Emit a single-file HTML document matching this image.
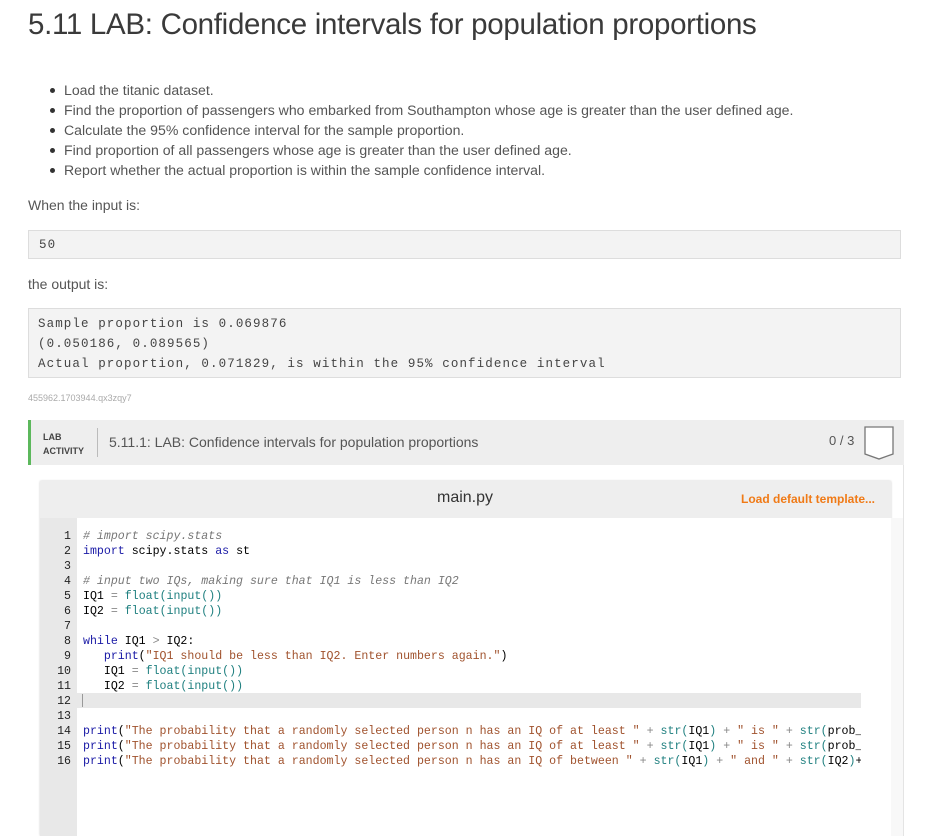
<!DOCTYPE html>
<html><head><meta charset="utf-8">
<style>
*{margin:0;padding:0;box-sizing:border-box}
body{width:928px;height:836px;overflow:hidden;background:#fff;font-family:"Liberation Sans",sans-serif;color:#333;position:relative}
.a{position:absolute}
h1{position:absolute;left:28px;top:8px;font-size:29.5px;font-weight:normal;color:#3a3a3a;letter-spacing:-0.3px}
ul{position:absolute;left:46px;top:80px;list-style:none;font-size:14.1px;color:#555}
li{height:20px;line-height:20px;position:relative;padding-left:18px}
li:before{content:"";position:absolute;left:4px;top:8px;width:5px;height:5px;border-radius:50%;background:#333}
.t{font-size:14px;color:#555}
.box{position:absolute;left:28px;width:873px;background:#f3f3f3;border:1px solid #ddd;font-family:"Liberation Mono",monospace;font-size:12.5px;color:#444;letter-spacing:1.1px}
.code{font-family:"Liberation Mono",monospace;font-size:11.6px;line-height:15px;white-space:pre;color:#000}
.c{color:#777;font-style:italic}.k{color:#1a1aa6}.s{color:#a0522d}.f{color:#208080}.o{color:#888}
.ln{font-family:"Liberation Mono",monospace;font-size:11.6px;line-height:15px;text-align:right;color:#222;width:31px}
</style></head><body>
<h1>5.11 LAB: Confidence intervals for population proportions</h1>
<ul>
<li>Load the titanic dataset.</li>
<li>Find the proportion of passengers who embarked from Southampton whose age is greater than the user defined age.</li>
<li>Calculate the 95% confidence interval for the sample proportion.</li>
<li>Find proportion of all passengers whose age is greater than the user defined age.</li>
<li>Report whether the actual proportion is within the sample confidence interval.</li>
</ul>
<div class="a t" style="left:28px;top:197px">When the input is:</div>
<div class="box" style="top:230px;height:29px;padding:7px 10px;">50</div>
<div class="a t" style="left:28px;top:276px">the output is:</div>
<div class="box" style="top:308px;height:70px;padding:5px 9px;line-height:20px">Sample proportion is 0.069876<br>(0.050186, 0.089565)<br>Actual proportion, 0.071829, is within the 95% confidence interval</div>
<div class="a" style="left:28px;top:393px;font-size:9px;color:#aaa">455962.1703944.qx3zqy7</div>

<div class="a" style="left:28px;top:420px;width:876px;height:416px;border-right:1px solid #e4e4e4"></div>
<div class="a" style="left:28px;top:420px;width:876px;height:45px;background:#eee;border-left:3px solid #5cb85c"></div>
<div class="a" style="left:43px;top:430px;font-size:9px;font-weight:bold;color:#444;line-height:14px">LAB<br>ACTIVITY</div>
<div class="a" style="left:97px;top:428px;width:1px;height:29px;background:#bbb"></div>
<div class="a" style="left:109px;top:434px;font-size:14px;color:#555">5.11.1: LAB: Confidence intervals for population proportions</div>
<div class="a" style="left:829px;top:433px;font-size:13px;color:#555">0 / 3</div>
<svg class="a" style="left:864px;top:426px" width="30" height="35"><path d="M1 1H29V28L15 33L1 28Z" fill="#fff" stroke="#777" stroke-width="1.3"/></svg>

<div class="a" style="left:40px;top:481px;width:851px;height:355px;background:#fff;box-shadow:0 0 2px #ccc"></div>
<div class="a" style="left:40px;top:481px;width:851px;height:37px;background:#eee"></div>
<div class="a" style="left:437px;top:489px;font-size:16px;color:#333">main.py</div>
<div class="a" style="left:741px;top:492px;font-size:12px;font-weight:bold;color:#f07a16">Load default template...</div>
<div class="a" style="left:40px;top:518px;width:37px;height:318px;background:#e8e8e8"></div>
<div class="a" style="left:40px;top:693px;width:821px;height:15px;background:#e8e8e8"></div>
<div class="a" style="left:82px;top:694px;width:1px;height:13px;background:#999"></div>
<div class="a" style="left:891px;top:518px;width:12px;height:318px;background:#f8f8f8"></div>
<div class="a ln" style="left:40px;top:529px">1<br>2<br>3<br>4<br>5<br>6<br>7<br>8<br>9<br>10<br>11<br>12<br>13<br>14<br>15<br>16</div>
<div class="a" style="left:83px;top:529px;width:778px;overflow:hidden"><div class="code"><span class="c"># import scipy.stats</span>
<span class="k">import</span> scipy.stats <span class="k">as</span> st

<span class="c"># input two IQs, making sure that IQ1 is less than IQ2</span>
IQ1 <span class="o">=</span> <span class="f">float(input())</span>
IQ2 <span class="o">=</span> <span class="f">float(input())</span>

<span class="k">while</span> IQ1 <span class="o">&gt;</span> IQ2:
   <span class="k">print</span>(<span class="s">"IQ1 should be less than IQ2. Enter numbers again."</span>)
   IQ1 <span class="o">=</span> <span class="f">float(input())</span>
   IQ2 <span class="o">=</span> <span class="f">float(input())</span>


<span class="k">print</span>(<span class="s">"The probability that a randomly selected person n has an IQ of at least "</span> <span class="o">+</span> <span class="f">str(</span>IQ1<span class="f">)</span> <span class="o">+</span> <span class="s">" is "</span> <span class="o">+</span> <span class="f">str(</span>prob_above)
<span class="k">print</span>(<span class="s">"The probability that a randomly selected person n has an IQ of at least "</span> <span class="o">+</span> <span class="f">str(</span>IQ1<span class="f">)</span> <span class="o">+</span> <span class="s">" is "</span> <span class="o">+</span> <span class="f">str(</span>prob_above)
<span class="k">print</span>(<span class="s">"The probability that a randomly selected person n has an IQ of between "</span> <span class="o">+</span> <span class="f">str(</span>IQ1<span class="f">)</span> <span class="o">+</span> <span class="s">" and "</span> <span class="o">+</span> <span class="f">str(</span>IQ2<span class="f">)</span>+</div></div>
</body></html>
